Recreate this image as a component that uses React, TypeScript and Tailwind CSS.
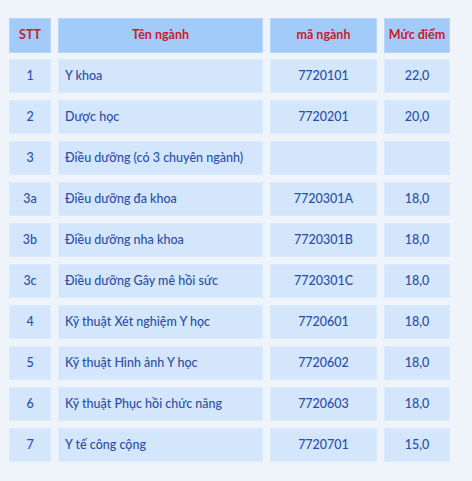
const ROWS: [string, string, string, string][] = [
  ["1", "Y khoa", "7720101", "22,0"],
  ["2", "Dược học", "7720201", "20,0"],
  ["3", "Điều dưỡng (có 3 chuyên ngành)", "", ""],
  ["3a", "Điều dưỡng đa khoa", "7720301A", "18,0"],
  ["3b", "Điều dưỡng nha khoa", "7720301B", "18,0"],
  ["3c", "Điều dưỡng Gây mê hồi sức", "7720301C", "18,0"],
  ["4", "Kỹ thuật Xét nghiệm Y học", "7720601", "18,0"],
  ["5", "Kỹ thuật Hình ảnh Y học", "7720602", "18,0"],
  ["6", "Kỹ thuật Phục hồi chức năng", "7720603", "18,0"],
  ["7", "Y tế công cộng", "7720701", "15,0"],
];

const HEADERS = ["STT", "Tên ngành", "mã ngành", "Mức điểm"];

export default function App() {
  return (
    <div
      className="w-[472px] h-[481px] bg-[#eff4fb] pl-[9px] pt-[18px]"
      style={{ fontFamily: 'Lato, "Noto Sans", sans-serif' }}
    >
      <div className="grid grid-cols-[42px_205px_107px_66px] gap-x-[7px] gap-y-[7px] auto-rows-[34px]">
        {HEADERS.map((h) => (
          <div
            key={h}
            className="h-[35px] bg-[#a3cbf9] border border-[#b7d6fa] flex items-center justify-center text-[12.5px] font-bold text-[#cc1a2c]"
          >
            {h}
          </div>
        ))}
        {ROWS.map(([stt, name, code, score]) => (
          <div key={stt} className="contents">
            <div className="bg-[#d3e6fc] border border-[#dbeafd] flex items-center justify-center text-[12.5px] font-medium text-[#2b4ea6]">
              {stt}
            </div>
            <div className="bg-[#d3e6fc] border border-[#dbeafd] flex items-center pl-[6px] text-[12.5px] font-medium text-[#2b4ea6] whitespace-nowrap">
              {name}
            </div>
            <div className="bg-[#d3e6fc] border border-[#dbeafd] flex items-center justify-center text-[12.5px] font-medium text-[#2b4ea6]">
              {code}
            </div>
            <div className="bg-[#d3e6fc] border border-[#dbeafd] flex items-center justify-center text-[12.5px] font-medium text-[#2b4ea6]">
              {score}
            </div>
          </div>
        ))}
      </div>
    </div>
  );
}
